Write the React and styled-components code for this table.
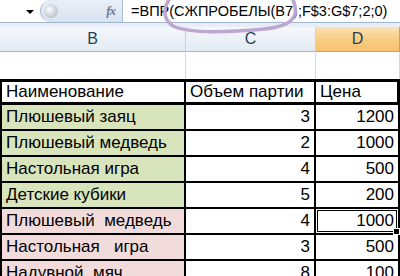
import styled, { createGlobalStyle } from 'styled-components';

const GlobalStyle = createGlobalStyle`
  body {
    margin: 0;
    overflow: hidden;
    background: #ffffff;
    font-family: "Liberation Sans", Arial, sans-serif;
  }
`;

const rows = [
  { name: 'Плюшевый заяц', qty: 3, price: 1200, tone: 'green' },
  { name: 'Плюшевый медведь', qty: 2, price: 1000, tone: 'green' },
  { name: 'Настольная игра', qty: 4, price: 500, tone: 'green' },
  { name: 'Детские кубики', qty: 5, price: 200, tone: 'green' },
  { name: 'Плюшевый  медведь', qty: 4, price: 1000, tone: 'pink', selected: true },
  { name: 'Настольная   игра', qty: 3, price: 500, tone: 'pink' },
  { name: 'Надувной  мяч', qty: 8, price: 100, tone: 'pink' },
];

const fills = { green: '#d8e4bc', pink: '#f2dcdb' };

const App = () => {
  return (
    <Window>
      <GlobalStyle />
      <FormulaBar>
        <NameBox>
          <DropArrow />
        </NameBox>
        <FxButton>
          <Ball />
          <Fx>fx</Fx>
        </FxButton>
        <FormulaInput>=ВПР(СЖПРОБЕЛЫ(B7);F$3:G$7;2;0)</FormulaInput>
        <Annotation width="142" height="36" viewBox="0 0 142 36">
          <path
            d="M8 0 C2 9 2 19 12 26 C28 34 70 32 103 29 C122 27 131 23 134 14 C135 8 134 4 132 0"
            fill="none"
            stroke="#bea6d0"
            strokeWidth="3.5"
            strokeLinecap="round"
          />
        </Annotation>
      </FormulaBar>
      <Gap />
      <Sheet>
        <ColHead>B</ColHead>
        <ColHead>C</ColHead>
        <ColHead $active>D</ColHead>

        <BlankCell />
        <BlankCell />
        <BlankCell />

        <HeadCell $first>Наименование</HeadCell>
        <HeadCell>Объем партии</HeadCell>
        <HeadCell $last>Цена</HeadCell>

        {rows.map((r, i) => (
          <Row key={i} r={r} />
        ))}
      </Sheet>
    </Window>
  );
};

const Row = ({ r }) => (
  <>
    <Cell $first $fill={fills[r.tone]}>{r.name}</Cell>
    <Cell $num>{r.qty}</Cell>
    <Cell $num $last>
      {r.price}
      {r.selected && (
        <Selection>
          <FillHandle />
        </Selection>
      )}
    </Cell>
  </>
);

const Window = styled.div`
  width: 400px;
  height: 276px;
  overflow: hidden;
  background: #fff;
`;

const FormulaBar = styled.div`
  position: relative;
  display: flex;
  height: 22px;
  border-bottom: 1px solid #9eb6ce;
  background: #fff;
`;

const NameBox = styled.div`
  width: 40px;
  position: relative;
  display: flex;
  align-items: center;
  justify-content: flex-end;
  padding-right: 6px;
  box-sizing: border-box;
`;

const DropArrow = styled.span`
  width: 0;
  height: 0;
  border-left: 4px solid transparent;
  border-right: 4px solid transparent;
  border-top: 4px solid #000;
  margin-top: 2px;
`;

const FxButton = styled.div`
  width: 83px;
  display: flex;
  align-items: center;
  justify-content: space-between;
  box-sizing: border-box;
  padding: 0 7px 0 3px;
  background: linear-gradient(#e9eff7, #d8e2ef);
  border: 1px solid #a7bcd6;
  border-top: none;
  border-bottom: none;
  border-radius: 11px 0 0 11px;
`;

const Ball = styled.span`
  width: 14px;
  height: 14px;
  border-radius: 50%;
  background: radial-gradient(circle at 40% 40%, #ffffff, #c6ccd4 60%, #a9b1bc);
`;

const Fx = styled.span`
  font-family: "Liberation Serif", "Times New Roman", serif;
  font-style: italic;
  font-weight: bold;
  font-size: 13px;
  color: #6f7d8f;
  letter-spacing: -1px;
`;

const FormulaInput = styled.div`
  flex: 1;
  display: flex;
  align-items: center;
  padding-left: 8px;
  font-size: 14.5px;
  color: #000;
  white-space: pre;
`;

const Annotation = styled.svg`
  position: absolute;
  left: 161px;
  top: 0;
  pointer-events: none;
`;

const Gap = styled.div`
  height: 4px;
  background: #e9eef6;
`;

const Sheet = styled.div`
  display: grid;
  grid-template-columns: 186px 130px 84px;
  grid-auto-rows: 26px;
  grid-template-rows: 25px 27px 26px;
`;

const ColHead = styled.div`
  display: flex;
  align-items: center;
  justify-content: center;
  font-size: 16px;
  color: ${(p) => (p.$active ? '#2c3e4f' : '#27415a')};
  background: ${(p) =>
    p.$active
      ? 'linear-gradient(#fbe2b4, #f8cd83 55%, #f6c26d)'
      : 'linear-gradient(#f4f7fb, #e4ebf4)'};
  border-right: 1px solid ${(p) => (p.$active ? '#f29536' : '#c5d2e1')};
  border-bottom: 1px solid ${(p) => (p.$active ? '#f29536' : '#9eb6ce')};
  box-sizing: border-box;
`;

const BlankCell = styled.div`
  border-right: 1px solid #d0d7e5;
  box-sizing: border-box;
`;

const HeadCell = styled.div`
  display: flex;
  align-items: center;
  padding-left: 4px;
  font-size: 17px;
  color: #000;
  border-top: 3px solid #000;
  border-bottom: 3px solid #000;
  border-right: ${(p) => (p.$last ? '3px' : '2px')} solid #000;
  border-left: ${(p) => (p.$first ? '2px solid #000' : 'none')};
  box-sizing: border-box;
  white-space: pre;
`;

const Cell = styled.div`
  position: relative;
  display: flex;
  align-items: center;
  justify-content: ${(p) => (p.$num ? 'flex-end' : 'flex-start')};
  padding: 0 4px;
  font-size: 17px;
  color: #000;
  background: ${(p) => p.$fill || '#fff'};
  border-bottom: 2px solid #000;
  border-right: 2px solid #000;
  border-left: ${(p) => (p.$first ? '2px solid #000' : 'none')};
  box-sizing: border-box;
  white-space: pre;
`;

const Selection = styled.div`
  position: absolute;
  inset: -2px -2px -2px -2px;
  border: 4px double #000;
  pointer-events: none;
`;

const FillHandle = styled.span`
  position: absolute;
  right: -4px;
  bottom: -4px;
  width: 5px;
  height: 5px;
  background: #000;
  border: 1px solid #fff;
`;

export default App;
